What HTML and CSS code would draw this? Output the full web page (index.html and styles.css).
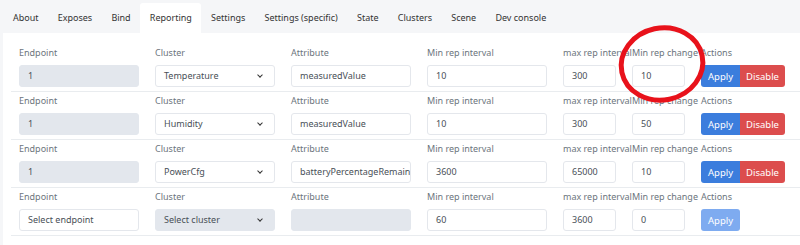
FILE: index.html
```html
<!DOCTYPE html>
<html lang="en">
<head>
    <meta charset="UTF-8" />
    <title>Reporting</title>
    <link rel="stylesheet" href="styles.css">
</head>
<body>
    <ul class="tabs">
        <li>About</li>
        <li>Exposes</li>
        <li>Bind</li>
        <li class="active">Reporting</li>
        <li>Settings</li>
        <li>Settings (specific)</li>
        <li>State</li>
        <li>Clusters</li>
        <li>Scene</li>
        <li>Dev console</li>
    </ul>
    <div class="card">
        <div class="rep-row">
            <div class="field"><label>Endpoint</label><div class="input disabled">1</div></div>
            <div class="field"><label>Cluster</label><div class="input select">Temperature<span class="chev"></span></div></div>
            <div class="field"><label>Attribute</label><div class="input">measuredValue</div></div>
            <div class="field"><label>Min rep interval</label><div class="input">10</div></div>
            <div class="field"><label>max rep interval</label><div class="input">300</div></div>
            <div class="field"><label>Min rep change</label><div class="input">10</div></div>
            <div class="field"><label>Actions</label><div class="btn-group"><button class="btn btn-blue">Apply</button><button class="btn btn-red">Disable</button></div></div>
        </div>
        <div class="rep-row">
            <div class="field"><label>Endpoint</label><div class="input disabled">1</div></div>
            <div class="field"><label>Cluster</label><div class="input select">Humidity<span class="chev"></span></div></div>
            <div class="field"><label>Attribute</label><div class="input">measuredValue</div></div>
            <div class="field"><label>Min rep interval</label><div class="input">10</div></div>
            <div class="field"><label>max rep interval</label><div class="input">300</div></div>
            <div class="field"><label>Min rep change</label><div class="input">50</div></div>
            <div class="field"><label>Actions</label><div class="btn-group"><button class="btn btn-blue">Apply</button><button class="btn btn-red">Disable</button></div></div>
        </div>
        <div class="rep-row">
            <div class="field"><label>Endpoint</label><div class="input disabled">1</div></div>
            <div class="field"><label>Cluster</label><div class="input select">PowerCfg<span class="chev"></span></div></div>
            <div class="field"><label>Attribute</label><div class="input">batteryPercentageRemaining</div></div>
            <div class="field"><label>Min rep interval</label><div class="input">3600</div></div>
            <div class="field"><label>max rep interval</label><div class="input">65000</div></div>
            <div class="field"><label>Min rep change</label><div class="input">10</div></div>
            <div class="field"><label>Actions</label><div class="btn-group"><button class="btn btn-blue">Apply</button><button class="btn btn-red">Disable</button></div></div>
        </div>
        <div class="rep-row">
            <div class="field"><label>Endpoint</label><div class="input">Select endpoint</div></div>
            <div class="field"><label>Cluster</label><div class="input select disabled">Select cluster<span class="chev"></span></div></div>
            <div class="field"><label>Attribute</label><div class="input disabled"></div></div>
            <div class="field"><label>Min rep interval</label><div class="input">60</div></div>
            <div class="field"><label>max rep interval</label><div class="input">3600</div></div>
            <div class="field"><label>Min rep change</label><div class="input">0</div></div>
            <div class="field"><label>Actions</label><div class="btn-group"><button class="btn btn-blue faded">Apply</button></div></div>
        </div>
    </div>
    <svg class="mark" width="100" height="90" viewBox="0 0 100 90">
        <ellipse cx="50" cy="45" rx="41" ry="36" transform="rotate(-12 50 45)" fill="none" stroke="#e8121b" stroke-width="5" />
    </svg>
</body>
</html>
```

FILE: styles.css
```css
html, body {
    margin: 0;
    padding: 0;
    background: #f5f6f8;
    font-family: 'Noto Sans', 'Open Sans', sans-serif;
    font-size: 9px;
    color: #495057;
}

body {
    position: relative;
    width: 800px;
    height: 245px;
    overflow: hidden;
}

.tabs {
    list-style: none;
    margin: 0;
    padding: 3px 0 0 3px;
    display: flex;
    height: 30px;
}

.tabs li {
    padding: 0 9.6px;
    line-height: 30px;
    color: #333;
    white-space: nowrap;
}

.tabs li:first-child {
    padding-left: 10px;
}

.tabs li.active {
    background: #fff;
    border-radius: 3px 3px 0 0;
}

.card {
    background: #fff;
    margin-left: 3px;
    padding: 11px 0 20px 8px;
}

.rep-row {
    display: grid;
    grid-template-columns: 120px 120px 120px 120px 53px 53px auto;
    column-gap: 16px;
    padding: 1px 0 4px 8px;
    border-bottom: 1px solid #e9ecef;
}

.field {
    min-width: 0;
}

.field label {
    display: block;
    line-height: 16px;
    margin-bottom: 4px;
    color: #6c757d;
    white-space: nowrap;
}

.input {
    box-sizing: border-box;
    height: 22px;
    line-height: 20px;
    padding: 0 8px;
    border: 1px solid #e4e7ec;
    border-radius: 3px;
    background: #fff;
    color: #495057;
    white-space: nowrap;
    overflow: hidden;
}

.input.disabled {
    background: #e3e7ed;
    border-color: #e3e7ed;
}

.input.select {
    position: relative;
}

.chev {
    position: absolute;
    right: 12px;
    top: 7px;
    width: 3px;
    height: 3px;
    border-right: 1.5px solid #333;
    border-bottom: 1.5px solid #333;
    transform: rotate(45deg);
}

.btn-group {
    display: flex;
}

.btn {
    height: 22px;
    border: none;
    padding: 0;
    font-family: inherit;
    font-size: 9.5px;
    color: #fff;
    cursor: pointer;
}

.btn-blue {
    background: #3b7ddd;
    border-radius: 3px 0 0 3px;
    width: 39px;
}

.btn-red {
    background: #dc4d4d;
    border-radius: 0 3px 3px 0;
    width: 45px;
}

.btn-blue.faded {
    background: #7eabf0;
    border-radius: 3px;
}

.mark {
    position: absolute;
    left: 612px;
    top: 19px;
}
```
